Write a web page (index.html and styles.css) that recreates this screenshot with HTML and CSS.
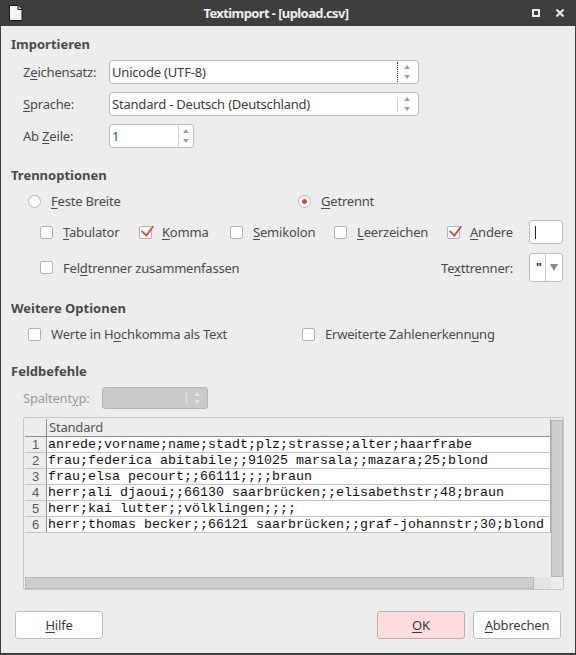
FILE: index.html
```html
<!DOCTYPE html>
<html lang="de">
<head>
<meta charset="utf-8">
<title>Textimport</title>
<link rel="stylesheet" href="styles.css">
</head>
<body>
<div class="win">
  <div class="titlebar">
    <div class="ticon">
      <svg width="15" height="16" viewBox="0 0 15 16"><path d="M1.5 0.5h8.5l4 4v11h-12.5z" fill="#f4f4f4" stroke="#1a1a1a"/><path d="M10 0.5v4h4" fill="#c8c8c8" stroke="#1a1a1a"/></svg>
    </div>
    <div class="ttitle">Textimport - [upload.csv]</div>
    <div class="tbtns">
      <span class="tmax"></span>
      <svg class="tclose" width="8" height="8" viewBox="0 0 8 8"><path d="M0.5 0.5L7.5 7.5M7.5 0.5L0.5 7.5" stroke="#ececec" stroke-width="2"/></svg>
    </div>
  </div>

  <div class="content">
    <div class="heading h-import">Importieren</div>

    <div class="frow first">
      <div class="flabel">Z<u>e</u>ichensatz:</div>
      <div class="combo wide">
        <div class="ctext">Unicode (UTF-8)</div>
        <div class="sep dotted"></div>
        <div class="arrows"><span class="up"></span><span class="down"></span></div>
      </div>
    </div>

    <div class="frow">
      <div class="flabel"><u>S</u>prache:</div>
      <div class="combo wide">
        <div class="ctext">Standard - Deutsch (Deutschland)</div>
        <div class="sep short"></div>
        <div class="arrows"><span class="up"></span><span class="down"></span></div>
      </div>
    </div>

    <div class="frow">
      <div class="flabel">Ab <u>Z</u>eile:</div>
      <div class="combo spin">
        <div class="ctext num">1</div>
        <div class="sep"></div>
        <div class="arrows narrow"><span class="up"></span><span class="down"></span></div>
      </div>
    </div>

    <div class="heading h-trenn">Trennoptionen</div>

    <div class="radios">
      <div class="opt"><span class="radio"></span><span><u>F</u>este Breite</span></div>
      <div class="opt"><span class="radio on"></span><span><u>G</u>etrennt</span></div>
    </div>

    <div class="checks">
      <div class="opt"><span class="cb"></span><span><u>T</u>abulator</span></div>
      <div class="opt"><span class="cb"><svg class="tick" width="13" height="13" viewBox="0 0 13 13"><path d="M2.6 4.8L7.4 9.6L14.2 0.2" fill="none" stroke="#e0463f" stroke-width="1.9"/></svg></span><span><u>K</u>omma</span></div>
      <div class="opt"><span class="cb"></span><span><u>S</u>emikolon</span></div>
      <div class="opt"><span class="cb"></span><span><u>L</u>eerzeichen</span></div>
      <div class="opt"><span class="cb"><svg class="tick" width="13" height="13" viewBox="0 0 13 13"><path d="M2.6 4.8L7.4 9.6L14.2 0.2" fill="none" stroke="#e0463f" stroke-width="1.9"/></svg></span><span><u>A</u>ndere</span></div>
      <div class="otherfield"><span class="caret"></span></div>
    </div>

    <div class="feldrow">
      <div class="opt"><span class="cb"></span><span>Fel<u>d</u>trenner zusammenfassen</span></div>
      <div class="ttgroup">
        <span class="ttlabel">Te<u>x</u>ttrenner:</span>
        <div class="ttcombo">
          <span class="ttval">"</span>
          <span class="sep"></span>
          <span class="ttarrow"><span class="bigdown"></span></span>
        </div>
      </div>
    </div>

    <div class="heading h-weitere">Weitere Optionen</div>

    <div class="more">
      <div class="opt"><span class="cb"></span><span>Werte in H<u>o</u>chkomma als Text</span></div>
      <div class="opt"><span class="cb"></span><span>Erweiterte Zahlenerkenn<u>u</u>ng</span></div>
    </div>

    <div class="heading h-feld">Feldbefehle</div>

    <div class="typrow">
      <div class="tlabel">Spaltent<u>y</u>p:</div>
      <div class="combo disabled">
        <div class="ctext"></div>
        <div class="sep short"></div>
        <div class="arrows narrow"><span class="up"></span><span class="down"></span></div>
      </div>
    </div>

    <div class="grid">
      <div class="table">
        <div class="trow head"><div class="rn"></div><div class="hcell">Standard</div></div>
        <div class="trow"><div class="rn">1</div><div class="dcell">anrede;vorname;name;stadt;plz;strasse;alter;haarfrabe</div></div>
        <div class="trow"><div class="rn">2</div><div class="dcell">frau;federica abitabile;;91025 marsala;;mazara;25;blond</div></div>
        <div class="trow"><div class="rn">3</div><div class="dcell">frau;elsa pecourt;;66111;;;;braun</div></div>
        <div class="trow"><div class="rn">4</div><div class="dcell">herr;ali djaoui;;66130 saarbrücken;;elisabethstr;48;braun</div></div>
        <div class="trow"><div class="rn">5</div><div class="dcell">herr;kai lutter;;völklingen;;;;</div></div>
        <div class="trow"><div class="rn">6</div><div class="dcell">herr;thomas becker;;66121 saarbrücken;;graf-johannstr;30;blond</div></div>
      </div>
      <div class="vscroll"></div>
      <div class="hscroll"><div class="hthumb"></div><div class="hrest"></div></div>
      <div class="corner"></div>
    </div>

    <div class="buttons">
      <div class="btn help"><span><u>H</u>ilfe</span></div>
      <div class="btn ok"><span><u>O</u>K</span></div>
      <div class="btn cancel"><span><u>A</u>bbrechen</span></div>
    </div>
  </div>
</div>
</body>
</html>
```

FILE: styles.css
```css
* { box-sizing: border-box; }
html, body { margin: 0; padding: 0; }
body {
  font-family: "Noto Sans", "Open Sans", sans-serif;
  font-size: 13px;
  color: #4b4b4b;
  background: #ededed;
  letter-spacing: -0.2px;
}
u { text-decoration: underline; text-underline-offset: 2px; text-decoration-thickness: 1px; }

.win { width: 576px; height: 655px; display: flex; flex-direction: column; }

/* title bar */
.titlebar { height: 26px; flex: none; background: #3e3e3e; display: flex; align-items: center; }
.ticon { width: 30px; padding-left: 8px; display: flex; align-items: center; height: 26px; }
.ttitle { flex: 1; text-align: center; color: #efefef; font-weight: bold; font-size: 13px; letter-spacing: -0.6px; line-height: 26px; }
.tbtns { width: 54px; display: flex; align-items: center; padding-left: 10px; gap: 16px; }
.tmax { width: 8px; height: 8px; border: 2px solid #ececec; display: block; }
.tclose { display: block; }

/* content */
.content {
  flex: 1;
  border: 1px solid #3e3e3e;
  border-top: 0;
  border-bottom-width: 2px;
  padding: 0 10px 14px 10px;
  display: flex;
  flex-direction: column;
}
.heading { font-weight: bold; line-height: 18px; height: 18px; letter-spacing: 0; color: #4a4a4a; }
.h-import { margin-top: 9px; }
.h-trenn { margin-top: 18px; }
.h-weitere { margin-top: 17px; }
.h-feld { margin-top: 19px; }

.frow { display: flex; align-items: center; height: 24px; margin-top: 8px; padding-left: 12px; }
.frow.first { margin-top: 7px; }
.flabel { width: 86px; }

.combo {
  height: 24px;
  background: #fff;
  border: 1px solid #bdbdbd;
  border-radius: 3px;
  display: flex;
  align-items: center;
  color: #3c3c3c;
}
.combo.wide { width: 310px; }
.combo.spin { width: 85px; }
.ctext { flex: 1; padding-left: 2px; white-space: nowrap; overflow: hidden; }
.ctext.num { color: #2a5594; }
.sep { width: 1px; align-self: stretch; background: #d2d2d2; }
.sep.dotted { background: none; border-left: 1px dotted #333; margin: 1px 0; }
.sep.short { align-self: center; height: 15px; }
.arrows { width: 20px; display: flex; flex-direction: column; align-items: center; justify-content: center; gap: 6px; padding-right: 3px; }
.arrows.narrow { width: 14px; padding-right: 0; }
.up { width: 0; height: 0; border-left: 3px solid transparent; border-right: 3px solid transparent; border-bottom: 4px solid #a0a0a0; }
.down { width: 0; height: 0; border-left: 3px solid transparent; border-right: 3px solid transparent; border-top: 4px solid #a0a0a0; }

/* options */
.opt { display: flex; align-items: center; white-space: nowrap; }
.radio {
  width: 13px; height: 13px; border-radius: 50%;
  border: 1px solid #b3b3b3; background: #fff;
  margin-right: 10px; flex: none;
  display: flex; align-items: center; justify-content: center;
}
.radio.on::after { content: ""; width: 5px; height: 5px; border-radius: 50%; background: #e0463f; }
.cb {
  width: 13px; height: 13px; border-radius: 2px;
  border: 1px solid #b3b3b3; background: #fff;
  margin-right: 10px; flex: none; display: block;
}
.tick { display: block; overflow: visible; margin: -1px 0 0 -1px; }

.radios { display: grid; grid-template-columns: 270px auto; height: 18px; margin-top: 8px; padding-left: 17px; align-items: center; }
.checks {
  display: grid;
  grid-template-columns: 99px 91px 104px 113px 82px 34px;
  height: 24px; margin-top: 10px; padding-left: 29px; align-items: center;
}
.otherfield {
  width: 34px; height: 24px; background: #fff; border: 1px solid #bdbdbd; border-radius: 3px;
  display: flex; align-items: center; padding-left: 5px;
}
.caret { width: 1px; height: 13px; background: #222; }

.feldrow { display: flex; justify-content: space-between; align-items: center; height: 29px; margin-top: 9px; padding-left: 29px; padding-right: 2px; }
.ttgroup { display: flex; align-items: center; }
.ttlabel { margin-right: 16px; }
.ttcombo {
  width: 34px; height: 29px; background: #fff; border: 1px solid #bdbdbd; border-radius: 3px;
  display: flex; align-items: stretch;
}
.ttval { width: 15px; padding-left: 6px; line-height: 27px; color: #333; font-weight: bold; font-size: 12px; }
.ttcombo .sep { background: #cfcfcf; }
.ttarrow { flex: 1; display: flex; align-items: center; justify-content: center; }
.bigdown { width: 0; height: 0; border-left: 4px solid transparent; border-right: 4px solid transparent; border-top: 7px solid #8a8a8a; }

.more { display: grid; grid-template-columns: 274px auto; height: 18px; margin-top: 8px; padding-left: 17px; align-items: center; }

.typrow { display: flex; align-items: center; height: 22px; margin-top: 7px; padding-left: 12px; }
.tlabel { width: 79px; color: #9a9a9a; }
.combo.disabled { width: 106px; height: 22px; background: #cacaca; border-color: #b4b4b4; }
.combo.disabled .sep { background: #e2e2e2; height: 12px; }
.combo.disabled .up { border-bottom-color: #e4e4e4; }
.combo.disabled .down { border-top-color: #e4e4e4; }
.combo.disabled .arrows { gap: 4px; width: 20px; }

/* grid preview */
.grid {
  margin-top: 8px; margin-left: 12px;
  width: 541px; height: 173px;
  border: 1px solid #c6c6c6; border-radius: 2px;
  padding: 1px 0 0 1px;
  display: grid;
  grid-template-columns: 526px 12px;
  grid-template-rows: 158px 12px;
  background: #ededed;
}
.table { display: flex; flex-direction: column; }
.trow { display: flex; height: 16px; border-bottom: 1px solid #c4c4c4; border-right: 1px solid #a9a9a9; }
.trow.head { height: 18px; border-bottom-color: #8e8e8e; }
.rn {
  width: 22px; flex: none; border-right: 1px solid #8e8e8e;
  text-align: center; color: #5a5a5a;
  font-family: "Liberation Sans", sans-serif; font-size: 13px; line-height: 15px; letter-spacing: 0;
}
.hcell { flex: 1; padding-left: 2px; line-height: 17px; color: #555; }
.dcell {
  flex: 1; background: #fff; padding-left: 1px;
  font-family: "Liberation Mono", "Cousine", monospace; font-size: 13.33px; line-height: 15px;
  color: #111; white-space: pre; letter-spacing: 0; overflow: hidden;
}
.vscroll { background: #cdcdcd; border: 1px solid #b7b7b7; margin-top: 1px; }
.hscroll { display: flex; }
.hthumb { width: 509px; background: #cdcdcd; border: 1px solid #b7b7b7; }
.hrest { flex: 1; background: #e4e4e4; }
.corner { background: #ededed; }

/* buttons */
.buttons { display: flex; height: 28px; margin-top: 21px; padding: 0 4px; gap: 8px; }
.btn {
  width: 88px; height: 28px; background: #fff; border: 1px solid #bdbdbd; border-radius: 3px;
  display: flex; align-items: center; justify-content: center; color: #3c3c3c;
}
.btn.ok { margin-left: auto; background: #fcdcdc; border-color: #c3a9a9; }
```
